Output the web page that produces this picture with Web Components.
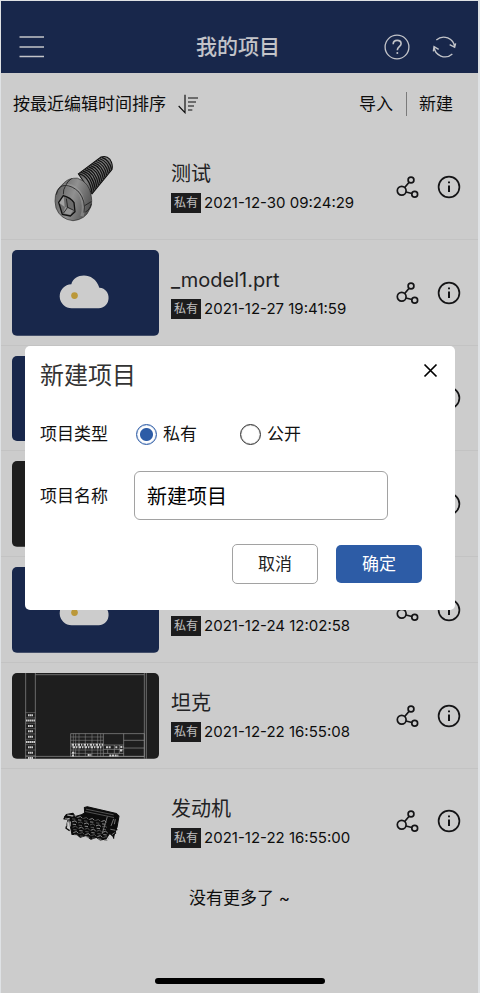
<!DOCTYPE html>
<html lang="zh-CN">
<head>
<meta charset="utf-8">
<meta name="viewport" content="width=device-width, initial-scale=1">
<title>我的项目</title>
<style>
  body { margin: 0; background: #fff; color: #1d1d1f; font-family: Inter, "Noto Sans CJK SC", sans-serif; font-size: 17px; line-height: 24px; }
</style>
</head>
<body>
<project-page></project-page>

<template id="t-page">
  <style>
    :host { display: flex; flex-direction: column; position: relative; box-sizing: border-box; min-height: 100vh; background: #fff;
      border: solid #dfe2e5; border-width: 1px 2px 0 1px; background-clip: padding-box; }
    .more { text-align: center; margin: 0; padding-top: 12px; color: #111; }
    .home { width: 170px; height: 6px; border-radius: 3px; background: #000; margin: auto auto 9px; }
  </style>
  <app-header>我的项目</app-header>
  <list-toolbar></list-toolbar>
  <main>
    <project-item art="bolt" date="2021-12-30 09:24:29">测试</project-item>
    <project-item art="cloud" date="2021-12-27 19:41:59">_model1.prt</project-item>
    <project-item art="cloud"></project-item>
    <project-item art="plain"></project-item>
    <project-item art="cloud" date="2021-12-24 12:02:58"></project-item>
    <project-item art="sheet" date="2021-12-22 16:55:08">坦克</project-item>
    <project-item art="engine" date="2021-12-22 16:55:00">发动机</project-item>
  </main>
  <p class="more">没有更多了 ~</p>
  <div class="home"></div>
  <new-project-dialog></new-project-dialog>
</template>

<template id="t-header">
  <style>
    :host { display: grid; grid-template-columns: 1fr auto 1fr; align-items: center; height: 52px; padding: 20px 20px 0 17px; background: #1e315e; color: #f4f6fc; }
    h1 { margin: 0; font-size: 21px; line-height: 30px; font-weight: 500; }
    nav { display: flex; justify-content: flex-end; gap: 19px; }
    button { display: block; border: 0; padding: 0; background: none; color: inherit; width: 28px; height: 28px; }
    svg { display: block; width: 28px; height: 28px; fill: none; stroke: currentColor; }
  </style>
  <button aria-label="菜单"><svg viewBox="0 0 28 28" stroke-width="1.5"><path d="M1.500 4H26M1.500 14H26M1.500 23.500H26"/></svg></button>
  <h1><slot></slot></h1>
  <nav>
    <button aria-label="帮助"><svg viewBox="0 0 28 28" stroke-width="1.3"><circle cx="14" cy="14" r="11.900"/><path stroke-width="1.600" d="M10.200 11.200C10.200 8.800 11.800 7.400 14.200 7.400C16.500 7.400 18.100 8.800 18.100 10.800C18.100 13.800 14.300 13.700 14.300 17.200"/><circle cx="14.300" cy="20" r="1" fill="currentColor" stroke="none"/></svg></button>
    <button aria-label="刷新"><svg viewBox="571 98 84 84" stroke-width="4"><path d="M590 119A33 33 0 0 1 645 141M630 133L645 141L648 129M583 139A33 33 0 0 0 638 161M581 153L583 139L597 147"/></svg></button>
  </nav>
</template>

<template id="t-toolbar">
  <style>
    :host { display: flex; justify-content: space-between; align-items: center; height: 61px; padding: 0 25px 0 12px; color: #111; }
    div { display: flex; align-items: center; }
    button { border: 0; padding: 0; background: none; color: inherit; font: inherit; display: flex; align-items: center; gap: 12px; }
    .import { padding-right: 13px; border-right: 1px solid #999; }
    .new { padding-left: 12px; }
    svg { width: 20px; height: 20px; fill: none; stroke: currentColor; stroke-width: 3.500; }
  </style>
  <button>按最近编辑时间排序<svg viewBox="534 284 60 60"><path d="M555 286V340L536 320M564 296H594M564 308H588M564 320H582M564 332H577"/></svg></button>
  <div><button class="import">导入</button><button class="new">新建</button></div>
</template>

<template id="t-item">
  <style>
    :host { display: flex; align-items: center; padding: 10px 17px 9px 11px; border-bottom: 1px solid #f4f4f4; }
    :host(:last-child) { border-bottom-color: transparent; }
    .info { flex: 1; min-width: 0; padding-left: 12px; }
    h2 { margin: 0 0 5px; min-height: 28px; font-size: 20px; line-height: 28px; font-weight: 400; color: #2b2b2d; }
    .meta { display: flex; align-items: center; gap: 3px; font-size: 15px; line-height: 20px; color: #111; white-space: nowrap; }
    .meta[hidden] { display: flex; visibility: hidden; }
    .tag { background: #232325; color: #f0f0f0; font-size: 12px; padding: 0 3px; }
    nav { display: flex; gap: 18px; }
    button { display: block; border: 0; padding: 0; background: none; color: #1a1a1c; width: 24px; height: 24px; }
    button svg { display: block; width: 24px; height: 24px; fill: none; stroke: currentColor; stroke-width: 1.700; }
  </style>
  <project-thumb></project-thumb>
  <div class="info"><h2><slot></slot></h2><div class="meta"><span class="tag">私有</span><time></time></div></div>
  <nav>
    <button aria-label="分享"><svg viewBox="0 0 24 24"><circle cx="6.700" cy="15.700" r="4.400"/><circle cx="16" cy="5" r="2.900"/><circle cx="19.700" cy="19.200" r="2.900"/><path d="M9.700 12.500L14.100 7.200M11 17L16.900 18.500"/></svg></button>
    <button aria-label="详情"><svg viewBox="0 0 24 24"><circle cx="12" cy="12" r="10.400"/><path stroke-width="2" d="M12 6.500V8.200M12 10.400V17"/></svg></button>
  </nav>
</template>

<template id="t-dialog">
  <style>
    :host { position: absolute; inset: 0; display: grid; align-content: center; padding: 0 23px 38px 24px; background: rgba(0,0,0,.2); }
    form { box-sizing: border-box; background: #fff; border-radius: 5px; padding: 14px 15px 26px; color: #111; }
    header { display: flex; justify-content: space-between; align-items: flex-start; margin-bottom: 30px; }
    h2 { margin: 0; font-size: 24px; line-height: 32px; font-weight: 400; color: #333; }
    button { font: inherit; }
    .close { border: 0; padding: 0; background: none; color: #000; width: 20px; height: 20px; }
    .close svg { display: block; width: 20px; height: 20px; fill: none; stroke: currentColor; stroke-width: 1.700; }
    .row { display: grid; grid-template-columns: 94px 1fr; align-items: center; }
    fieldset { border: 0; margin: 0 0 25px; padding: 0; min-width: 0; }
    .choices { display: flex; gap: 43px; padding-left: 2px; }
    .choices label { display: flex; align-items: center; gap: 6px; }
    input[type=radio] { appearance: none; box-sizing: border-box; width: 21px; height: 21px; margin: 0; border: 1px solid #333; border-radius: 50%; box-shadow: inset 0 0 1px #333; }
    input[type=radio]:checked { border-color: #2d5ca6; box-shadow: inset 0 0 1px #2d5ca6; background: radial-gradient(circle, #2d5ca6 6px, transparent 7px); }
    input[type=text] { box-sizing: border-box; width: 83%; height: 49px; border: 1px solid #a2a2a2; border-radius: 6px; padding: 0 12px; font: inherit; font-size: 20px; color: #000; background: #fff; outline: 0; }
    footer { display: flex; justify-content: flex-end; align-items: center; gap: 18px; margin-top: 24px; padding-right: 18px; }
    footer button { box-sizing: border-box; width: 86px; height: 40px; border: 1px solid #a2a2a2; border-radius: 5px; background: #fff; color: #222; padding: 0; }
    footer .ok { height: 38px; background: #2d5ca6; border: 0; color: #fff; }
  </style>
  <form role="dialog" aria-labelledby="title">
    <header><h2 id="title">新建项目</h2><button class="close" type="button" aria-label="关闭"><svg viewBox="0 0 20 20"><path d="M4.500 4.500L16.500 16.500M16.500 4.500L4.500 16.500"/></svg></button></header>
    <fieldset aria-labelledby="kind">
      <div class="row"><span id="kind">项目类型</span>
        <div class="choices"><label><input type="radio" name="kind" checked>私有</label><label><input type="radio" name="kind">公开</label></div></div>
    </fieldset>
    <div class="row"><label for="name">项目名称</label><input id="name" type="text" value="新建项目"></div>
    <footer><button type="button">取消</button><button class="ok" type="button">确定</button></footer>
  </form>
</template>

<script>
  const stamp = (host, id) => {
    const root = host.attachShadow({ mode: 'open' });
    root.append(document.getElementById(id).content.cloneNode(true));
    return root;
  };

  // Screw thread: parallel curved ridges along the shaft
  const bolt = () => {
    let ridges = '';
    for (let i = 0; i < 13; i++) {
      const x = 103 + i * 5.6, y = 72 - i * 4.1;
      ridges += `<path d="M${x} ${y}q${30 - i * .5} 8 ${38 - i * .7} ${56 - i * 1.6}" fill="none" stroke="#161616" stroke-width="3.600"/>`;
    }
    return `<defs>
      <linearGradient id="sh" x1="0" y1="0" x2="1" y2="1"><stop offset="0" stop-color="#444"/><stop offset=".45" stop-color="#a2a2a2"/><stop offset="1" stop-color="#222"/></linearGradient>
      <linearGradient id="hd" x1="0" y1=".2" x2="1" y2=".6"><stop offset="0" stop-color="#777"/><stop offset=".5" stop-color="#b5b5b5"/><stop offset="1" stop-color="#666"/></linearGradient></defs>
      <path d="M100 72L168 22Q184 16 195 29Q205 44 201 59L141 132Z" fill="url(#sh)" stroke="#111" stroke-width="3"/>${ridges}
      <path d="M58 98Q72 84 97 85Q134 97 139 140Q143 165 133 179Q122 208 84 212Q46 208 33 174Q23 131 47 109Z" fill="url(#hd)" stroke="#333" stroke-width="2"/>
      <path d="M58 107Q91 102 108 136Q121 168 111 199" fill="none" stroke="#c9c9c9" stroke-width="10" opacity=".5"/>
      <path d="M34 134Q40 106 61 107Q82 107 102 127Q123 154 117 188M55 133Q54 119 62 107Q67 94 80 86M119 167L139 155M121 186Q134 180 139 162" fill="none" stroke="#222" stroke-width="2.500"/>
      <path d="M41 157L55 137Q77 143 87 158L90 185L76 198L52 193Z" fill="#888" stroke="#161616" stroke-width="4"/>
      <path d="M56 140L59 171L43 159Z" fill="#ccc"/><path d="M60 171L85 181L76 194L55 190Z" fill="#bbb"/>
      <path d="M64 146L68 172M68 172L86 181M68 172L55 190" fill="none" stroke="#222" stroke-width="2.500"/>`;
  };

  const cloud = () => `<rect x="36" y="360" width="441" height="256" fill="#1e315e"/>
    <path d="M216 534A36 36 0 0 1 214 462C222 429 283 423 298 473C336 475 335 534 296 534Z" fill="#fff"/>
    <circle cx="223.500" cy="496" r="10" fill="#eabf49"/>`;

  const plain = () => '<rect x="36" y="217" width="441" height="256" fill="#262626"/>';

  // CAD drawing sheet: border, revision column and title block
  const sheet = () => {
    let marks = '', cells = '';
    for (let i = 0; i < 9; i++) {
      const y = 335 + i * 16;
      marks += `<path d="M77 ${y}H106" stroke="#ddd"/><path d="M${i % 4 === 1 ? 78 : 84} ${y + 8}h${i % 4 === 1 ? 27 : 15}" stroke="#fff" stroke-width="6" stroke-dasharray="5 1"/>`;
    }
    for (const y of [408, 418, 428, 437, 447, 457]) cells += `M212 ${y}H310`;
    for (const x of [220, 227, 237, 256, 276, 293, 302]) cells += `M${x} 398V466`;
    return plain() + `<g fill="none" stroke="#b5b5b5" stroke-width="2">
      <path d="M77 217V473M106 217V473M433 217V473M439 217V473M106 222H433M77 466H433"/>
      <path d="M212 398H433V466H212ZM310 398V466M371 398V466M310 432H371M371 418H433M371 441H433M310 445H371M310 457H371M343 432V457M358 432V457M323 445V457"/>
      <path d="${cells}" stroke-width="1.500"/></g>${marks}
      <path d="M215 431H309M218 439H305" stroke="#fff" stroke-width="6" stroke-dasharray="7 3 4 4"/>
      <path d="M216 455H226M216 463H224M263 462H274M318 439H334M346 439H354M361 438H370M360 448H369M328 463H355" stroke="#fff" stroke-width="6" stroke-dasharray="6 2"/>`;
  };

  const engine = () => {
    let parts = '';
    for (let r = 0; r < 4; r++) for (let c = 0; c < 6; c++) {
      const x = 49 + c * 18 + r * 2, y = 76 + r * 16 + c * 3;
      parts += `<path d="M${x} ${y}l9 -3l6 5M${x + 2} ${y + 7}l10 1" stroke="${(r + c) % 2 ? '#c8c8c8' : '#777'}"/>`;
    }
    return `<g fill="#101010" stroke="#101010" stroke-width="3" stroke-linejoin="round">
      <path d="M88 49L97 47L184 67L192 75L187 103L176 137L164 126L153 143L136 146L124 138L108 144L93 133L76 138L65 129L51 130L46 104L44 84L29 77L34 70L54 66L61 76L79 71L89 65Z"/>
      <path d="M31 75L27 83L40 84L33 111L44 118" fill="none" stroke-width="4"/>
      <path d="M164 107L187 116M161 128L187 106M172 101L176 142M183 127L166 113" fill="none" stroke-width="4"/></g>
      <g fill="none" stroke-width="2.500">${parts}
      <path d="M93 54L176 71M91 61L177 79" stroke="#777"/><path d="M37 72L54 74M35 84L44 82M38 91L36 105M46 91L45 106" stroke="#d0d0d0" stroke-width="4"/>
      <path d="M157 76L151 97L141 128M176 83L168 104M181 84L178 99M166 114L181 117M171 130L179 124" stroke="#aaa"/></g>`;
  };

  const ART = {
    bolt: ['-99 -17 441 256', bolt], cloud: ['36 360 441 256', cloud], plain: ['36 217 441 256', plain],
    sheet: ['36 217 441 256', sheet], engine: ['-129 -36 441 256', engine]
  };

  customElements.define('project-thumb', class extends HTMLElement {
    connectedCallback() {
      if (this.shadowRoot) return;
      const [box, draw] = ART[this.getAttribute('art') || 'plain'];
      this.attachShadow({ mode: 'open' }).innerHTML =
        `<style>:host{display:block;flex:none;width:147px;aspect-ratio:12/7;border-radius:5px;overflow:hidden}svg{display:block;width:100%;height:100%}</style>
         <svg viewBox="${box}" preserveAspectRatio="none" aria-hidden="true">${draw()}</svg>`;
    }
  });

  customElements.define('project-item', class extends HTMLElement {
    connectedCallback() {
      if (this.shadowRoot) return;
      const root = this.attachShadow({ mode: 'open' });
      const view = document.getElementById('t-item').content.cloneNode(true);
      view.querySelector('project-thumb').setAttribute('art', this.getAttribute('art'));
      const date = this.getAttribute('date');
      if (date) view.querySelector('time').textContent = date;
      else {
        view.querySelector('.meta').hidden = true;
        view.querySelector('.tag').textContent = '\u00a0';
      }
      root.append(view);
    }
  });

  const simple = (name, id) => customElements.define(name, class extends HTMLElement {
    connectedCallback() { if (!this.shadowRoot) stamp(this, id); }
  });
  simple('app-header', 't-header');
  simple('list-toolbar', 't-toolbar');
  simple('new-project-dialog', 't-dialog');
  simple('project-page', 't-page');
</script>
</body>
</html>
